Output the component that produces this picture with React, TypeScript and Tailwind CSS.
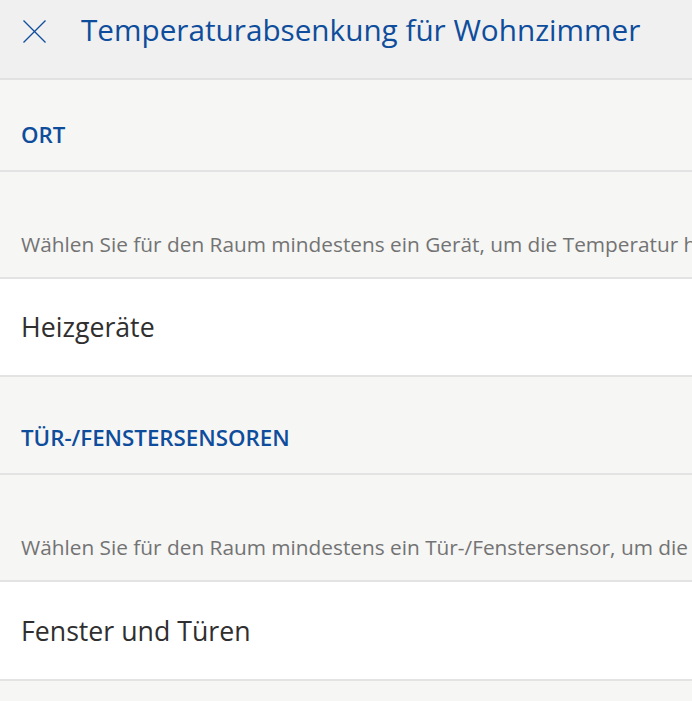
const font = { fontFamily: '"Open Sans", "Liberation Sans", sans-serif' };

function SectionTitle({ label, h }: { label: string; h: string }) {
  return (
    <div className={`${h} flex items-end px-[21px] pb-[20px] bg-[#f6f6f5] border-b-2 border-[#e3e3e3]`}>
      <span className="text-[22.3px] leading-[30px] font-semibold text-[#0e4d9c]">{label}</span>
    </div>
  );
}

function Hint({ text }: { text: string }) {
  return (
    <div className="h-[107px] flex items-end pl-[21px] pb-[19px] bg-[#f6f6f5] border-b-2 border-[#e3e3e3] overflow-hidden">
      <span className="text-[20.8px] leading-[28px] text-[#737373] whitespace-nowrap">{text}</span>
    </div>
  );
}

function Row({ label, h }: { label: string; h: string }) {
  return (
    <div className={`${h} flex items-center px-[21px] bg-white border-b-2 border-[#e3e3e3]`}>
      <span className="text-[26.7px] leading-[34px] text-[#2f2f2f]">{label}</span>
    </div>
  );
}

export default function App() {
  return (
    <div className="min-h-screen bg-[#f6f6f5] overflow-hidden" style={font}>
      <div className="h-[80px] flex items-start gap-[35px] pl-[23px] pt-[10px] bg-[#f0f0f0] border-b-2 border-[#e2e2e2]">
        <svg width="23" height="23" viewBox="0 0 23 23" className="mt-[10px] shrink-0" fill="none" stroke="#0e4d9c" strokeWidth="1.3">
          <line x1="0.5" y1="0.5" x2="22.5" y2="22.5" />
          <line x1="22.5" y1="0.5" x2="0.5" y2="22.5" />
        </svg>
        <h1 className="text-[29.7px] leading-[40px] font-normal text-[#0e4d9c] whitespace-nowrap">
          Temperaturabsenkung für Wohnzimmer
        </h1>
      </div>
      <SectionTitle label="ORT" h="h-[92px]" />
      <Hint text="Wählen Sie für den Raum mindestens ein Gerät, um die Temperatur herabzusetzen." />
      <Row label="Heizgeräte" h="h-[98px]" />
      <SectionTitle label="TÜR-/FENSTERSENSOREN" h="h-[98px]" />
      <Hint text="Wählen Sie für den Raum mindestens ein Tür-/Fenstersensor, um die Temperatur herabzusetzen." />
      <Row label="Fenster und Türen" h="h-[99px]" />
    </div>
  );
}
